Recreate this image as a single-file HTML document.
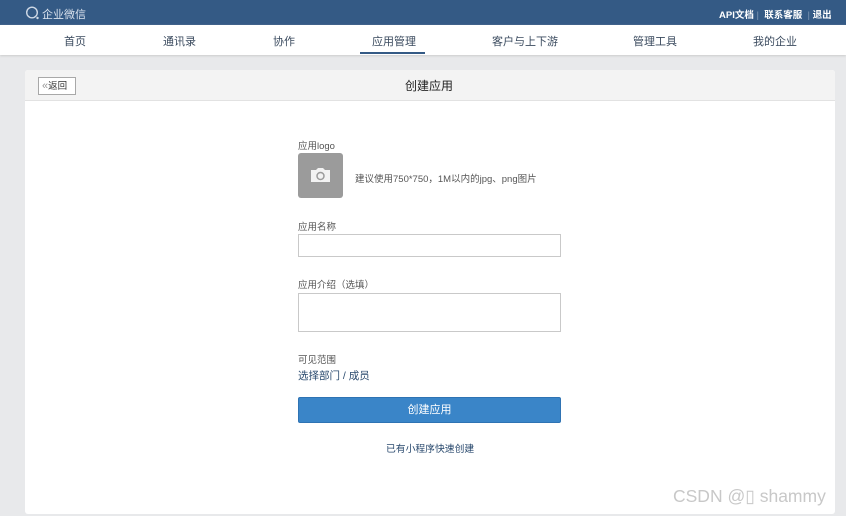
<!DOCTYPE html><html><head><meta charset="utf-8"><style>
*{margin:0;padding:0;box-sizing:border-box}
body{width:846px;height:516px;background:#e8e9eb;font-family:"Liberation Sans","Noto Sans CJK SC",sans-serif;position:relative;overflow:hidden;color:#333}
.top{position:absolute;left:0;top:0;width:846px;height:25px;background:#345a85}
.nav{position:absolute;top:25px;left:0;width:846px;height:30px;background:#fff;box-shadow:0 1px 2px #ccc}
.nav span{position:absolute;top:8px;font-size:11px;color:#3a4a5e}
.a{position:absolute;white-space:nowrap}
.card{position:absolute;left:25px;top:70px;width:810px;height:444px;background:#fff;border-radius:3px}
.hd{position:absolute;left:0;top:0;width:810px;height:31px;background:#f3f3f3;border-bottom:1px solid #e2e2e2;border-radius:3px 3px 0 0}
.lbl{position:absolute;left:298px;font-size:9.5px;color:#555}
.inp{position:absolute;left:298px;width:263px;border:1px solid #c9c9c9;background:#fff}
</style></head><body>
<div class="top">
<svg class="a" style="left:25px;top:6px" width="16" height="14" viewBox="0 0 16 14"><circle cx="7" cy="6.5" r="5.3" fill="none" stroke="#cfd9e6" stroke-width="1.4"/><circle cx="12.5" cy="12" r="1.2" fill="#cfd9e6"/></svg>
<span class="a" style="left:42px;top:6px;font-size:11px;color:#dbe3ee">企业微信</span>
<span class="a" style="left:719px;top:7px;font-size:9.5px;color:#fff;font-weight:bold">API文档 <span style="color:#7f98b5;font-weight:normal">|</span>&nbsp; 联系客服 &nbsp;<span style="color:#7f98b5;font-weight:normal">|</span> 退出</span>
</div>
<div class="nav">
<span style="left:64px">首页</span><span style="left:163px">通讯录</span><span style="left:273px">协作</span><span style="left:372px">应用管理</span><span style="left:492px">客户与上下游</span><span style="left:633px">管理工具</span><span style="left:753px">我的企业</span>
<div class="a" style="left:360px;top:27px;width:65px;height:2px;background:#345a85"></div>
</div>
<div class="card">
<div class="hd">
<div class="a" style="left:13px;top:7px;width:38px;height:18px;border:1px solid #a8a8a8;background:#fff;font-size:9.5px;line-height:16px;padding-left:3px;color:#333"><span style="color:#999;font-size:11px">«</span>返回</div>
<div class="a" style="left:380px;top:7px;font-size:12px;color:#222">创建应用</div>
</div>
</div>
<div class="lbl" style="top:138px">应用logo</div>
<div class="a" style="left:298px;top:153px;width:45px;height:45px;background:#9b9b9b;border-radius:3px"><svg style="position:absolute;left:12px;top:14px" width="21" height="16" viewBox="0 0 21 16"><path d="M1 3h5l2-2h5l2 2h5v12H1z" fill="#f2f2f2"/><circle cx="10.5" cy="9" r="3.5" fill="none" stroke="#9b9b9b" stroke-width="1.5"/></svg></div>
<div class="a" style="left:355px;top:171px;font-size:9.5px;color:#555">建议使用750*750，1M以内的jpg、png图片</div>
<div class="lbl" style="top:219px">应用名称</div>
<div class="inp" style="top:234px;height:23px"></div>
<div class="lbl" style="top:277px">应用介绍（选填）</div>
<div class="inp" style="top:293px;height:39px"></div>
<div class="lbl" style="top:352px">可见范围</div>
<div class="a" style="left:298px;top:368px;font-size:10.5px;color:#2a4a6e">选择部门 / 成员</div>
<div class="a" style="left:298px;top:397px;width:263px;height:26px;background:#3a85c8;border:1px solid #2f73b3;border-radius:2px;color:#fff;font-size:11px;text-align:center;line-height:24px">创建应用</div>
<div class="a" style="left:386px;top:441px;font-size:9.8px;color:#2a4a6e">已有小程序快速创建</div>
<div class="a" style="left:673px;top:486px;font-size:17.5px;color:#c8c8c8">CSDN @&#x25af; shammy</div>
</body></html>
